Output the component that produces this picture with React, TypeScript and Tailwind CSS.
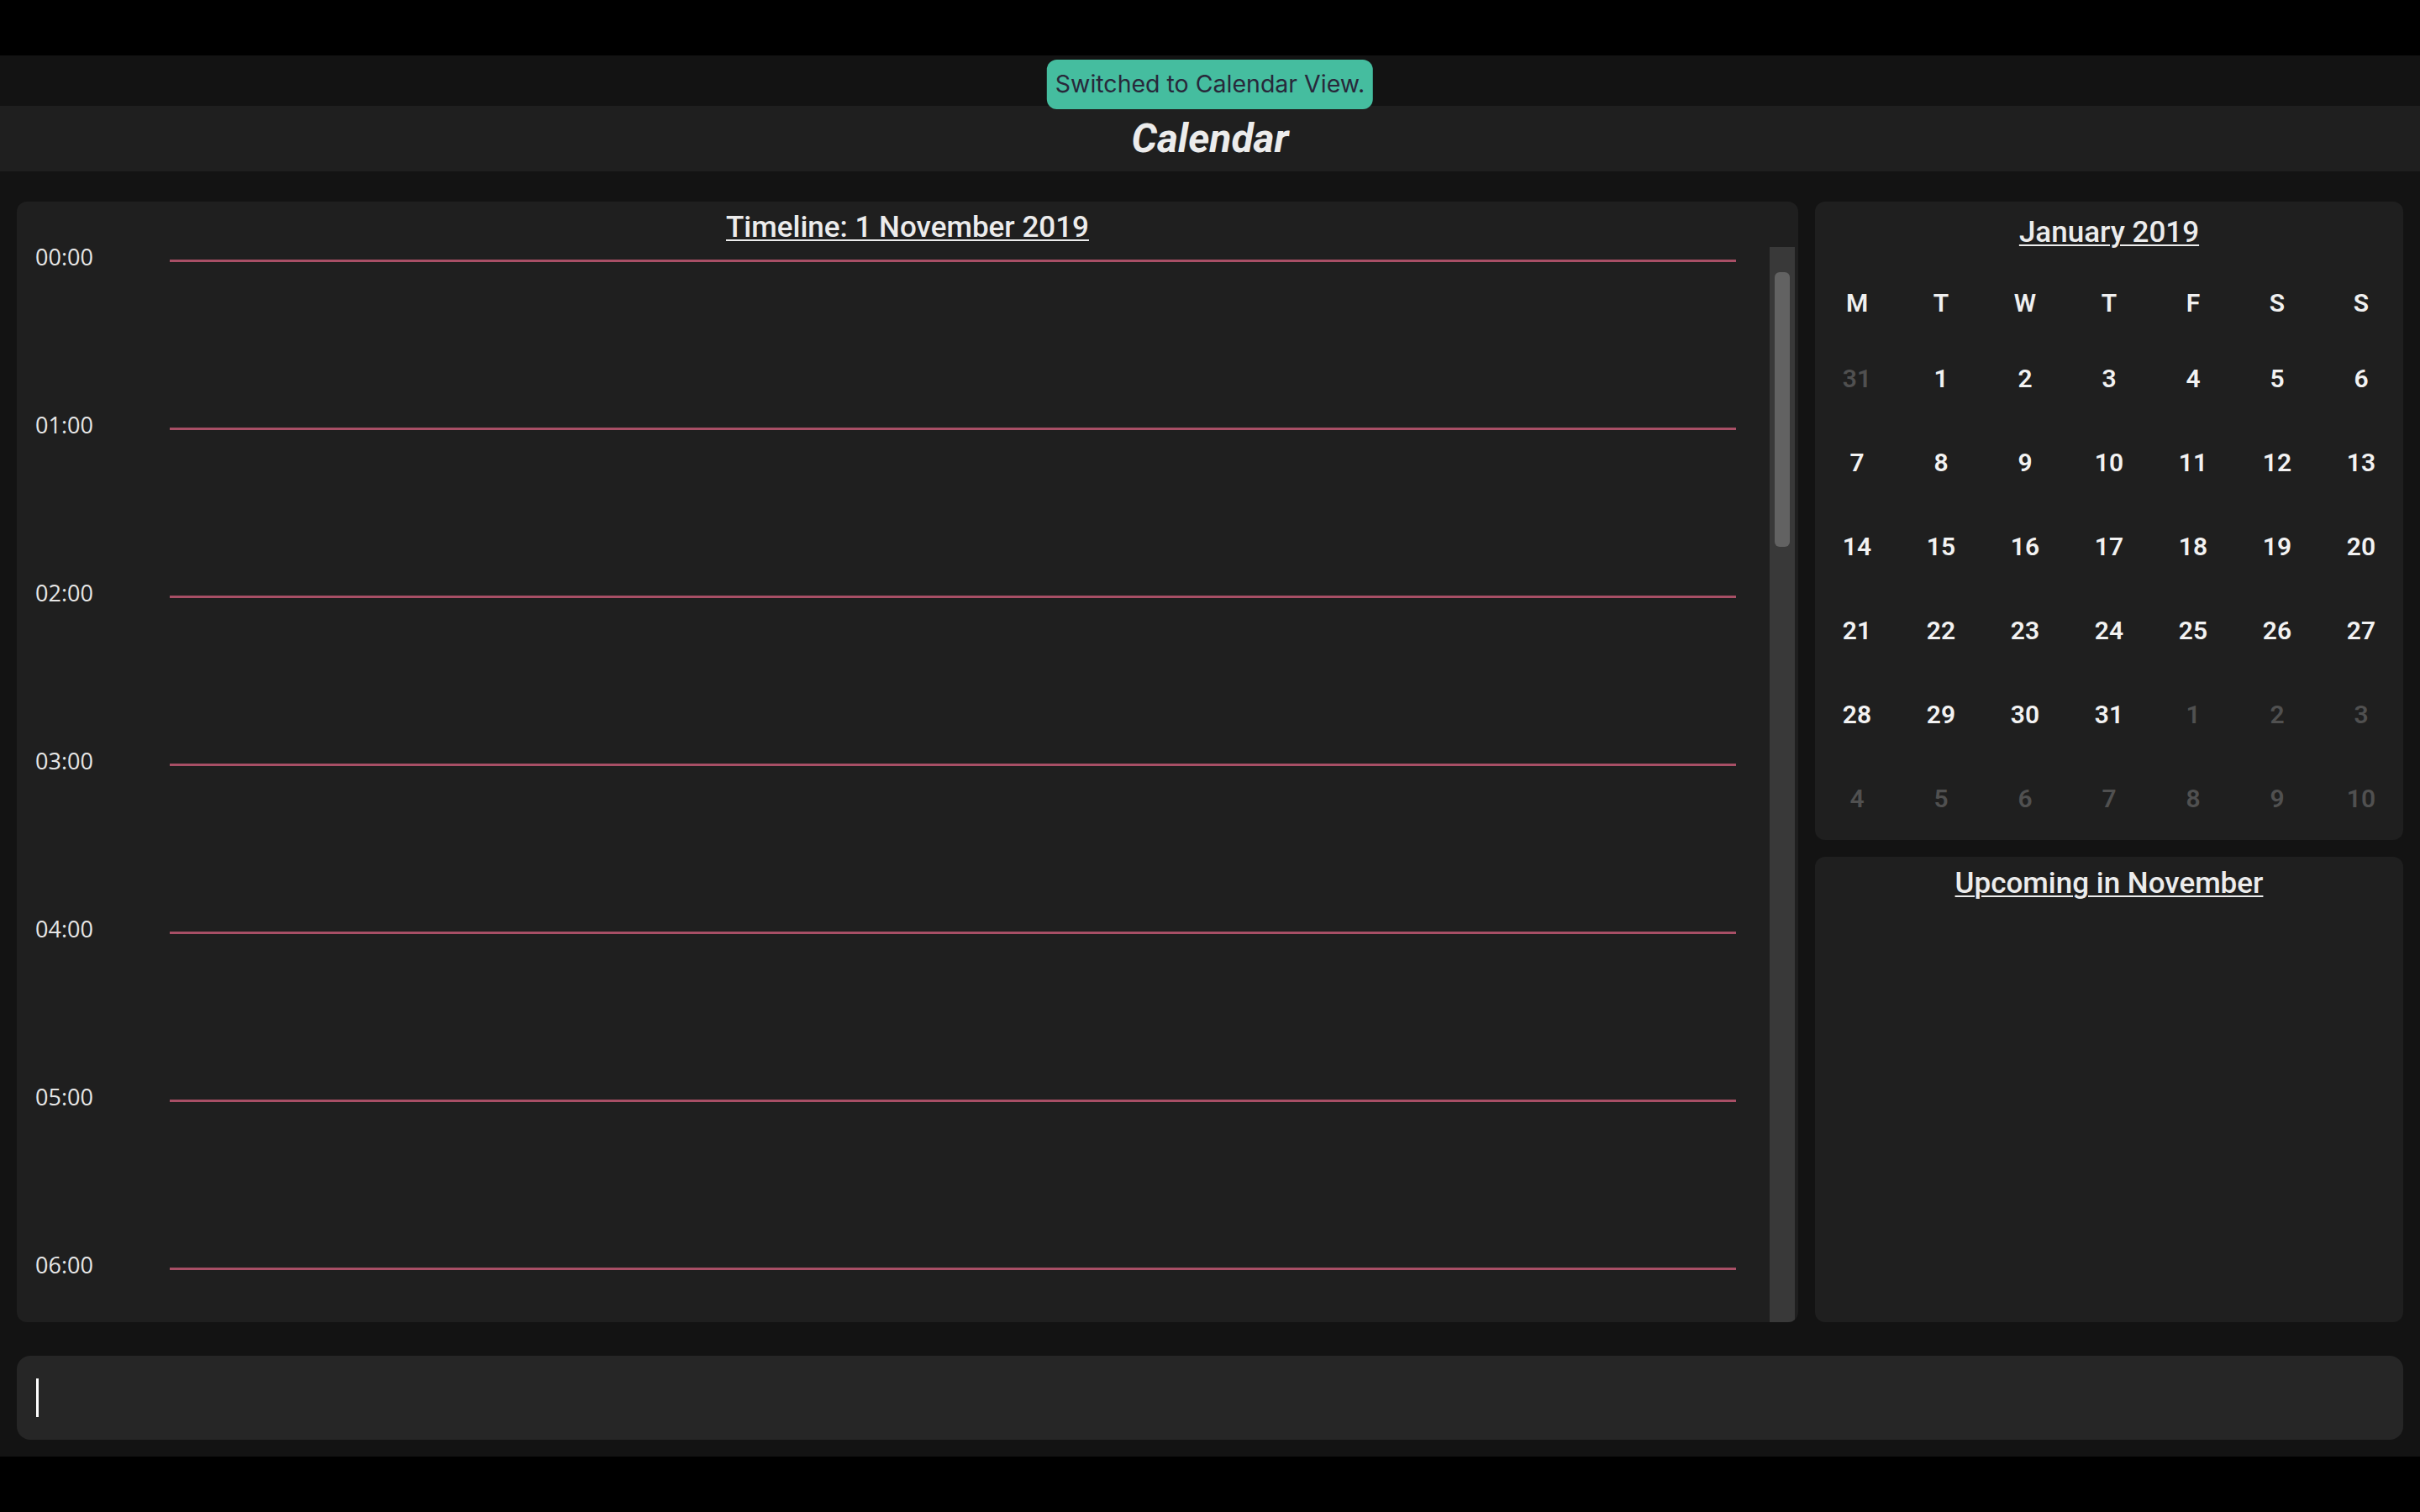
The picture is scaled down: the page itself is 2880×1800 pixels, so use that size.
import React from 'react';

const HOURS = ['00:00', '01:00', '02:00', '03:00', '04:00', '05:00', '06:00'];
const WEEKDAYS = ['M', 'T', 'W', 'T', 'F', 'S', 'S'];

type Day = { n: number; dim: boolean };

function buildMonth(): Day[] {
  const days: Day[] = [{ n: 31, dim: true }];
  for (let i = 1; i <= 31; i++) days.push({ n: i, dim: false });
  for (let i = 1; i <= 10; i++) days.push({ n: i, dim: true });
  return days;
}

function Timeline() {
  return (
    <div className="flex-1 flex flex-col rounded-xl bg-[#1f1f1f] overflow-hidden">
      <div className="h-[44px] flex justify-center pt-[17px]">
        <h2 className="font-['Roboto',sans-serif] font-medium text-[35px] leading-[27px] text-[#ececec] underline underline-offset-[3px] decoration-2">
          Timeline: 1 November 2019
        </h2>
      </div>
      <div className="flex-1 flex min-h-0">
        <div className="flex-1 overflow-hidden pt-[2px] pl-[22px] pr-[40px]">
          {HOURS.map((h) => (
            <div key={h} className="h-[200px] flex items-start">
              <span className="w-[160px] shrink-0 font-['Open_Sans',sans-serif] text-[27px] text-[#e6e6e6]">
                {h}
              </span>
              <div className="flex-1 h-[3px] mt-[23px] bg-[#a84f66]" />
            </div>
          ))}
        </div>
        <div className="w-[30px] mt-[10px] mr-[4px] bg-[#393939] pt-[30px] px-[6px]">
          <div className="h-[327px] rounded-md bg-[#626262]" />
        </div>
      </div>
    </div>
  );
}

function MonthCard() {
  const days = buildMonth();
  return (
    <div className="h-[760px] rounded-xl bg-[#1f1f1f] font-['Roboto',sans-serif]">
      <div className="h-[80px] flex justify-center pt-[16px]">
        <h2 className="font-medium text-[35px] leading-[41px] text-[#ececec] underline underline-offset-[3px] decoration-2">
          January 2019
        </h2>
      </div>
      <div className="grid grid-cols-7">
        {WEEKDAYS.map((d, i) => (
          <div key={i} className="h-[80px] flex items-center justify-center text-[30px] font-semibold text-[#f0f0f0]">
            {d}
          </div>
        ))}
        {days.map((d, i) => (
          <div
            key={i}
            className={
              d.dim
                ? 'h-[100px] flex items-center justify-center text-[30px] font-semibold text-[#505050]'
                : 'h-[100px] flex items-center justify-center text-[30px] font-semibold text-[#f2f2f2]'
            }
          >
            {d.n}
          </div>
        ))}
      </div>
    </div>
  );
}

function Upcoming() {
  return (
    <div className="flex-1 rounded-xl bg-[#1f1f1f] font-['Roboto',sans-serif]">
      <div className="flex justify-center pt-[11px]">
        <h2 className="font-medium text-[35px] leading-[41px] text-[#ececec] underline underline-offset-[3px] decoration-2">
          Upcoming in November
        </h2>
      </div>
    </div>
  );
}

export default function App() {
  return (
    <div className="w-[2880px] h-[1800px] bg-black">
      <div className="h-[66px]" />
      <div className="relative h-[1668px] bg-[#131313] flex flex-col">
        <div className="absolute top-[5px] left-1/2 -translate-x-1/2 h-[59px] px-[10px] flex items-center rounded-[12px] bg-[#45bd9f]">
          <span className="font-['Inter',sans-serif] text-[28.5px] text-[#28283a] whitespace-nowrap">
            Switched to Calendar View.
          </span>
        </div>
        <div className="h-[60px]" />
        <header className="h-[78px] bg-[#1f1f1f] flex items-center justify-center">
          <h1 className="font-['Roboto',sans-serif] italic font-bold text-[48px] text-[#ececec]">Calendar</h1>
        </header>
        <div className="flex-1 flex flex-col px-5 pt-9 pb-5">
          <div className="h-[1334px] flex gap-5">
            <Timeline />
            <div className="w-[700px] flex flex-col gap-5">
              <MonthCard />
              <Upcoming />
            </div>
          </div>
          <div className="mt-10 h-[100px] rounded-2xl bg-[#262626] flex items-center pl-[23px]">
            <div className="w-[3px] h-[46px] bg-white" />
          </div>
        </div>
      </div>
    </div>
  );
}
